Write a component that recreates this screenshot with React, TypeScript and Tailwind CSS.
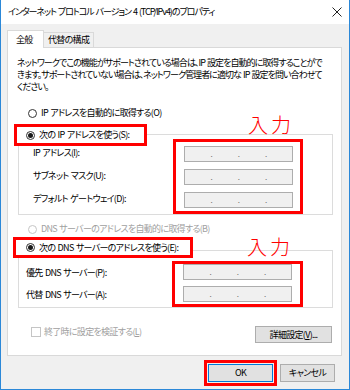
import React from "react";

function Radio({ checked, disabled }: { checked?: boolean; disabled?: boolean }) {
    return (
        <span
            className={`w-[9px] h-[9px] rounded-full border bg-white flex items-center justify-center shrink-0 ${
                disabled ? "border-[#c5c5c5]" : "border-[#333333]"
            }`}
        >
            {checked && <span className="w-[5px] h-[5px] rounded-full bg-[#1a1a1a]" />}
        </span>
    );
}

function IpField() {
    return (
        <div className="h-[16px] w-[109px] bg-[#f0f0f0] border border-[#adadad] flex items-center text-[#6d6d6d] text-[8px] leading-none">
            <span className="flex-1" />
            <span>.</span>
            <span className="flex-1" />
            <span>.</span>
            <span className="flex-1" />
            <span>.</span>
            <span className="flex-1" />
        </div>
    );
}

function Annotation() {
    return (
        <div className="absolute left-[72px] -top-[27px] text-[20px] leading-none text-[#ff0000] tracking-[3px] whitespace-nowrap font-['Noto_Sans_CJK_JP',sans-serif] font-light">
            入力
        </div>
    );
}

export default function App() {
    return (
        <div className="w-[350px] h-[390px] bg-[#f0f0f0] border-x border-b border-[#2b88d8] flex flex-col text-[9px] leading-[12px] tracking-[-0.7px] [word-spacing:1px] whitespace-nowrap text-black font-['Noto_Sans_CJK_JP',sans-serif] [font-feature-settings:'palt'] overflow-hidden">
            {/* タイトルバー */}
            <div className="h-[24px] bg-white flex items-center justify-between pl-[7px] pr-[6px] shrink-0">
                <span className="text-[9px] tracking-[-1.05px]">インターネット プロトコル バージョン 4 (TCP/IPv4)のプロパティ</span>
                <svg width="10" height="10" viewBox="0 0 10 10" className="mr-[1px]">
                    <path d="M0.5 0.5 L9.5 9.5 M9.5 0.5 L0.5 9.5" stroke="#222" strokeWidth="1" />
                </svg>
            </div>

            {/* タブ */}
            <div className="flex items-end h-[18px] mt-[5px] pl-[6px] shrink-0">
                <div className="h-[18px] w-[37px] bg-white border-x border-t border-[#d9d9d9] pl-[8px] pt-[3px] relative z-10 -mb-px">
                    全般
                </div>
                <div className="h-[15px] w-[50px] bg-[#f0f0f0] border-r border-t border-[#d9d9d9] pl-[4px] pt-[1px]">
                    代替の構成
                </div>
            </div>

            {/* タブパネル */}
            <div className="ml-[6px] mr-[7px] h-[309px] bg-white border border-[#d9d9d9] flex flex-col shrink-0">
                <div className="pl-[9px] pt-[9px] tracking-[-0.95px]">
                    <div>ネットワークでこの機能がサポートされている場合は、IP 設定を自動的に取得することがで</div>
                    <div>きます。サポートされていない場合は、ネットワーク管理者に適切な IP 設定を問い合わせて</div>
                    <div>ください。</div>
                </div>

                <div className="flex items-center gap-[4px] pl-[20px] mt-[14px] h-[12px]">
                    <Radio />
                    <span>IP アドレスを自動的に取得する(O)</span>
                </div>

                {/* IP グループ */}
                <div className="mt-[5px] flex flex-col">
                    <div className="relative z-10 ml-[6px] w-[133px] h-[22px] border-[3px] border-[#ff0000] bg-white flex items-center gap-[4px] pl-[9px]">
                        <Radio checked />
                        <span>次の IP アドレスを使う(S):</span>
                    </div>
                    <div className="ml-[10px] mr-[8px] -mt-[12px] border border-[#dcdcdc] flex pt-[4px]">
                        <div className="flex-1 flex flex-col pl-[14px] pt-[8px] gap-[11px]">
                            <span>IP アドレス(I):</span>
                            <span>サブネット マスク(U):</span>
                            <span>デフォルト ゲートウェイ(D):</span>
                        </div>
                        <div className="relative mr-[29px] w-[130px] border-[3px] border-[#ff0000] flex flex-col gap-[7px] pt-[4px] pb-[3px] pl-[8px]">
                            <Annotation />
                            <IpField />
                            <IpField />
                            <IpField />
                        </div>
                    </div>
                </div>

                <div className="flex items-center gap-[4px] pl-[20px] mt-[8px] h-[12px] text-[#a0a0a0]">
                    <Radio disabled />
                    <span>DNS サーバーのアドレスを自動的に取得する(B)</span>
                </div>

                {/* DNS グループ */}
                <div className="mt-[2px] flex flex-col">
                    <div className="relative z-10 ml-[5px] w-[180px] h-[21px] border-[3px] border-[#ff0000] bg-white flex items-center gap-[4px] pl-[10px]">
                        <Radio checked />
                        <span>次の DNS サーバーのアドレスを使う(E):</span>
                    </div>
                    <div className="ml-[10px] mr-[8px] -mt-[8px] border border-[#dcdcdc] flex pt-[10px]">
                        <div className="flex-1 flex flex-col pl-[7px] pt-[6px] gap-[10px]">
                            <span>優先 DNS サーバー(P):</span>
                            <span>代替 DNS サーバー(A):</span>
                        </div>
                        <div className="relative mr-[29px] w-[131px] border-[3px] border-[#ff0000] flex flex-col gap-[6px] pb-[2px] pl-[8px]">
                            <Annotation />
                            <IpField />
                            <IpField />
                        </div>
                    </div>
                </div>

                <div className="flex items-start justify-between mt-[17px] pl-[23px] pr-[9px]">
                    <div className="flex items-center gap-[3px] text-[#a0a0a0] mt-[1px]">
                        <span className="w-[10px] h-[10px] border border-[#c5c5c5] bg-white" />
                        <span>
                            終了時に設定を検証する(<span className="underline">L</span>)
                        </span>
                    </div>
                    <div className="w-[77px] h-[17px] mt-[1px] bg-[#e1e1e1] border border-[#adadad] flex items-center justify-center">
                        詳細設定(<span className="underline">V</span>)...
                    </div>
                </div>
            </div>

            {/* ボタン */}
            <div className="flex items-center justify-end gap-[3px] pt-[4px] pr-[14px]">
                <div className="border-[3px] border-[#ff0000] p-[1px]">
                    <div className="w-[65px] h-[18px] bg-[#e1e1e1] border border-[#0078d7] flex items-center justify-center">
                        OK
                    </div>
                </div>
                <div className="w-[55px] h-[18px] bg-[#e1e1e1] border border-[#adadad] flex items-center justify-center">
                    キャンセル
                </div>
            </div>
        </div>
    );
}
